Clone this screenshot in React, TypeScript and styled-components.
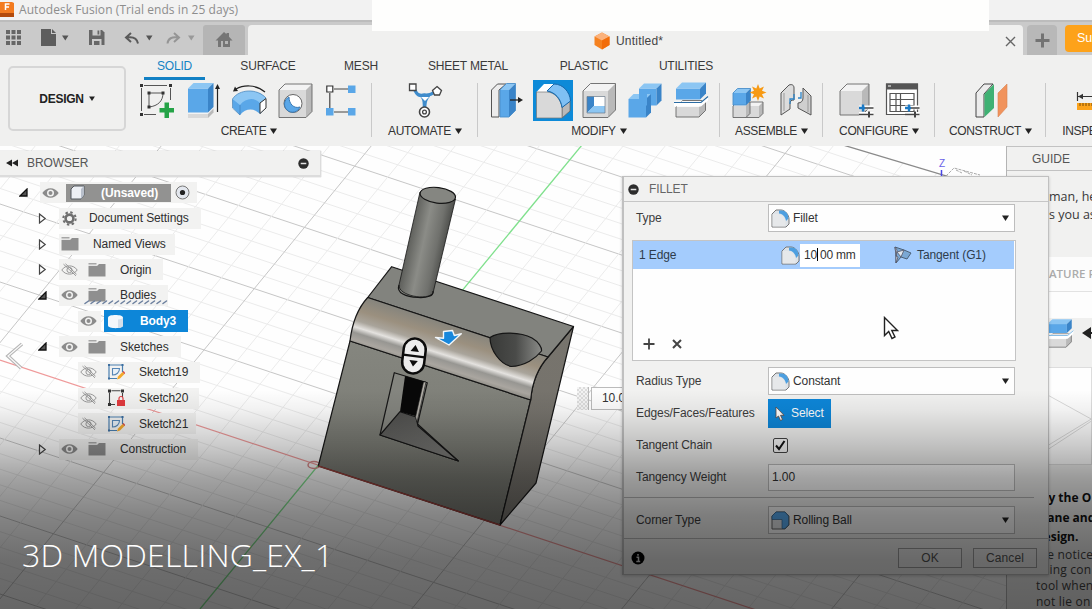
import React from "react";
import styled, { createGlobalStyle, css } from "styled-components";

const Global = createGlobalStyle`
  body { margin: 0; overflow: hidden; background: #fefefe; }
  * { box-sizing: border-box; }
`;

const Window = styled.div`
  position: relative;
  display: flex;
  flex-direction: column;
  width: 1092px;
  height: 609px;
  overflow: hidden;
  font-family: "Liberation Sans", Arial, sans-serif;
  font-size: 12px;
  letter-spacing: -0.1px;
  color: #333;
  white-space: nowrap;
`;

/* ---------- title and document tabs ---------- */

const TitleBar = styled.header`
  display: flex;
  align-items: center;
  height: 20px;
  flex: none;
  gap: 4px;
  background: #f2f2f2;
  color: #8d8d8d;
  font-family: "Open Sans", "Noto Sans", sans-serif;
  font-size: 12px;
  letter-spacing: 0.07px;
  svg { flex: none; }
`;

const TitleText = styled.span`
  margin-top: -2px;
`;

const BlankPatch = styled.div`
  position: absolute;
  left: 372px;
  top: 0;
  width: 617px;
  height: 31px;
  background: #fefefd;
`;

const TabStrip = styled.div`
  display: flex;
  align-items: flex-end;
  height: 35px;
  flex: none;
  background: #cacaca;
  border-top: 2px solid #bcbcbc;
  > * { flex: none; }
`;

const QuickBar = styled.div`
  width: 203px;
  height: 33px;
  display: flex;
  align-items: center;
`;

const HomeTab = styled.div`
  width: 42px;
  height: 30px;
  background: #b5b5b5;
  border-radius: 3px 3px 0 0;
  display: grid;
  place-items: center;
`;

const DocumentTab = styled.div`
  margin-left: 3px;
  width: 775px;
  height: 30px;
  padding: 2px 7px 0 346px;
  background: #f0f0ef;
  border-radius: 4px 4px 0 0;
  display: flex;
  align-items: center;
  color: #444;
  svg { flex: none; }
`;

const DocumentName = styled.span`
  flex: 1;
  margin-left: 6px;
  letter-spacing: 0.2px;
`;

const NewTab = styled.div`
  margin-left: 4px;
  width: 30px;
  height: 30px;
  background: #b8b8b8;
  border-radius: 4px 4px 0 0;
  display: grid;
  place-items: center;
`;

const Subscribe = styled.div`
  margin: 0 -60px 3px 8px;
  width: 80px;
  height: 27px;
  padding-left: 12px;
  line-height: 27px;
  border-radius: 4px;
  background: #fda21a;
  color: #fff;
  font-size: 12.5px;
`;

/* ---------- ribbon ---------- */

const Ribbon = styled.nav`
  display: flex;
  height: 91px;
  flex: none;
  background: #f0f0ef;
`;

const WorkspaceButton = styled.div`
  flex: none;
  margin: 11px 0 0 8px;
  width: 118px;
  height: 65px;
  border: 2px solid #d6d6d6;
  border-radius: 5px;
  display: flex;
  align-items: center;
  justify-content: center;
  gap: 5px;
  font-weight: bold;
  color: #222;
  letter-spacing: -0.25px;
`;

const RibbonBody = styled.div`
  display: flex;
  flex-direction: column;
  flex: none;
  width: 966px;
`;

const RibbonTabs = styled.div`
  display: flex;
  height: 25px;
`;

const RibbonTab = styled.div<{ $w: number; $ml?: number; $active?: boolean }>`
  width: ${(p) => p.$w}px;
  margin-left: ${(p) => p.$ml ?? 0}px;
  text-align: center;
  line-height: 23px;
  letter-spacing: -0.2px;
  height: 25px;
  color: ${(p) => (p.$active ? "#1584c4" : "#3a3a3a")};
  border-bottom: 3px solid ${(p) => (p.$active ? "#1180c4" : "transparent")};
`;

const Groups = styled.div`
  display: flex;
`;

const Group = styled.section<{ $w: number }>`
  position: relative;
  width: ${(p) => p.$w}px;
  flex: none;
  display: flex;
  flex-direction: column;
  align-items: center;
  height: 60px;
  &::after {
    content: "";
    position: absolute;
    right: 0;
    top: 3px;
    height: 54px;
    width: 1px;
    background: #c9c9c9;
  }
`;

const Tools = styled.div<{ $gap?: number }>`
  display: flex;
  gap: ${(p) => p.$gap ?? 6}px;
  height: 41px;
`;

const Tool = styled.div<{ $active?: boolean }>`
  width: 40px;
  height: 41px;
  ${(p) => p.$active && css`background: #0d8ad8;`}
`;

const GroupLabel = styled.div`
  display: flex;
  align-items: center;
  gap: 4px;
  margin-top: 3px;
  line-height: 14px;
  letter-spacing: -0.35px;
  color: #333;
`;

/* ---------- work area ---------- */

const WorkArea = styled.main`
  position: relative;
  display: flex;
  flex: 1;
  min-height: 0;
`;

const Viewport = styled.div`
  position: relative;
  width: 1006px;
  overflow: hidden;
  background: #fefefe;
  > svg { display: block; }
`;

const BrowserPanel = styled.aside`
  position: absolute;
  left: 0;
  top: 5px;
  width: 321px;
`;

const BrowserHead = styled.div`
  display: flex;
  align-items: center;
  height: 26px;
  padding: 0 11px 0 6px;
  margin-bottom: 3px;
  background: #f1f1f0;
  border: 1px solid #dcdcdc;
  border-width: 0 1px 2px 0;
  box-shadow: 0 0 1px #aaa;
  color: #555;
  span { flex: 1; margin-left: 9px; letter-spacing: -0.1px; }
`;

const TreeRow = styled.div<{ $indent: number }>`
  display: flex;
  align-items: center;
  height: 25.67px;
  padding-left: ${(p) => p.$indent}px;
  color: #2f2f2f;
`;

const Twisty = styled.div`
  width: 21px;
  display: flex;
`;

const RowBody = styled.div<{ $w: number }>`
  width: ${(p) => p.$w}px;
  height: 21px;
  display: flex;
  align-items: center;
  padding-left: 2px;
  background: #f2f2f1;
  svg { flex: none; }
`;

const RowLabel = styled.span<{ $ml: number }>`
  margin-left: ${(p) => p.$ml}px;
`;

const SlotIcon = styled.span<{ $ml: number }>`
  margin-left: ${(p) => p.$ml}px;
  display: flex;
`;

const RootChip = styled.div`
  margin: 0 4px 0 7px;
  width: 105px;
  height: 18px;
  background: #929291;
  color: #fff;
  font-weight: bold;
  display: flex;
  align-items: center;
  padding-left: 4px;
  gap: 15px;
`;

const BodyChip = styled.div`
  margin-left: 4px;
  width: 84px;
  height: 22px;
  flex: none;
  background: #0d86d8;
  color: #fff;
  font-weight: bold;
  display: flex;
  align-items: center;
  padding-left: 3px;
  gap: 16px;
`;

const HatchMark = styled.svg`
  position: absolute;
  left: 84px;
  top: 148px;
`;

const FloatingValue = styled.div`
  position: absolute;
  left: 577px;
  top: 241px;
  width: 60px;
  height: 23px;
  display: flex;
  gap: 2px;
`;

const Grip = styled.div`
  width: 12px;
  border-right: 1px solid #bbb;
  background: repeating-conic-gradient(#dcdcdc 0 25%, #f4f4f4 0 50%) 0 0 / 4px 4px;
`;

const FloatingField = styled.div`
  flex: 1;
  border: 1px solid #bbb;
  background: #fdfdfd;
  padding-left: 10px;
  line-height: 21px;
`;

/* ---------- guide ---------- */

const Guide = styled.aside`
  width: 86px;
  overflow: hidden;
  display: flex;
  flex-direction: column;
  background: #f1f1f0;
  border-left: 1px solid #b4b4b4;
  font-family: "Open Sans", "Noto Sans", sans-serif;
  letter-spacing: 0;
`;

const GuideHead = styled.div`
  height: 25px;
  flex: none;
  border: 1px solid #c2c2c2;
  border-width: 1px 0;
  line-height: 24px;
  padding-left: 25px;
  color: #555;
  font-family: "Liberation Sans", Arial, sans-serif;
`;

const GuideIntro = styled.div`
  height: 86px;
  flex: none;
  padding: 17px 0 0 42px;
  font-size: 12.5px;
  line-height: 18px;
  color: #383838;
`;

const GuideHeading = styled.div`
  height: 35px;
  flex: none;
  margin-left: 16px;
  padding-left: 26px;
  line-height: 34px;
  background: #fcfcfc;
  border-bottom: 1px solid #e2e2e2;
  font-size: 11.5px;
  font-weight: 600;
  color: #ababab;
`;

const GuideStep = styled.div`
  height: 75px;
  flex: none;
  margin-left: 16px;
  padding: 26px 0 0 22px;
  display: flex;
  gap: 7px;
  align-items: flex-start;
  background: linear-gradient(#fdfdfd 26px, #f0f0ef 26px);
  svg { flex: none; }
`;

const GuideFigure = styled.div`
  height: 98px;
  flex: none;
  margin-left: 16px;
  background: #fefefe;
  border: 1px solid #ddd;
`;

const GuideCopy = styled.div`
  padding: 23px 0 0 29px;
`;

const GuideStrong = styled.div`
  font-weight: 700;
  font-size: 12px;
  line-height: 19.5px;
  color: #111;
`;

const GuideLine = styled.div`
  font-size: 12px;
  line-height: 15.8px;
  letter-spacing: 0.2px;
  color: #444;
`;

/* ---------- fillet dialog ---------- */

const Dialog = styled.section`
  position: absolute;
  left: 622px;
  top: 30px;
  width: 427px;
  height: 399px;
  background: #f1f1f0;
  border: 1px solid #c0c0c0;
  border-left-width: 2px;
  box-shadow: 0 1px 3px rgba(0, 0, 0, 0.2);
`;

const DialogHead = styled.div`
  height: 25px;
  border-bottom: 1px solid #c6c6c6;
  display: flex;
  align-items: center;
  gap: 10px;
  padding-left: 4px;
  color: #666;
`;

const Field = styled.div<{ $h?: number }>`
  height: ${(p) => p.$h ?? 32}px;
  display: flex;
  align-items: center;
  padding-left: 12px;
`;

const FieldLabel = styled.label`
  width: 132px;
  color: #3c3c3c;
`;

const Combo = styled.div`
  width: 247px;
  height: 28px;
  background: #fefefe;
  border: 1px solid #bdbdbd;
  display: flex;
  align-items: center;
  padding: 0 5px 0 2px;
  span { flex: 1; margin-left: 3px; }
`;

const Entry = styled(Combo)`
  height: 27px;
  span { margin-left: 1px; }
`;

const EdgeList = styled.div`
  margin: 6px 0 4px 8px;
  width: 384px;
  height: 121px;
  background: #fefefe;
  border: 1px solid #c4c4c4;
  display: flex;
  flex-direction: column;
  justify-content: space-between;
`;

const EdgeRow = styled.div`
  height: 28px;
  margin-right: 1px;
  background: #a4ccfd;
  display: flex;
  align-items: center;
  padding-left: 6px;
  color: #2e3c4c;
`;

const EdgeCount = styled.span`
  width: 142px;
`;

const EdgeValue = styled.div`
  width: 60px;
  height: 23px;
  margin: 0 34px 0 0;
  background: #fff;
  line-height: 23px;
  padding-left: 4px;
  color: #333;
  letter-spacing: -0.2px;
`;

const Caret = styled.i`
  display: inline-block;
  width: 1px;
  height: 13px;
  background: #000;
  vertical-align: -2px;
  margin: 0 2px 0 0;
`;

const ListActions = styled.div`
  display: flex;
  gap: 16px;
  padding: 0 0 10px 10px;
`;

const SelectButton = styled.div`
  width: 63px;
  height: 29px;
  background: #0d86d8;
  color: #fff;
  display: flex;
  align-items: center;
  padding-left: 7px;
  gap: 6px;
`;

const Check = styled.div`
  margin-left: 5px;
  width: 15px;
  height: 15px;
  border: 1.5px solid #444;
  border-radius: 2px;
  background: #f6f6f6;
  display: flex;
`;

const CornerSection = styled.div`
  margin: 4px 14px 0 0;
  padding-top: 6px;
  border-top: 1px solid #b5b5b5;
`;

const DialogFoot = styled.footer`
  margin-top: 2px;
  border-top: 1px solid #b8b8b8;
  height: 38px;
  display: flex;
  align-items: center;
  padding: 0 11px 0 7px;
  gap: 11px;
`;

const Spacer = styled.span`
  flex: 1;
`;

const PushButton = styled.div`
  width: 64px;
  height: 20px;
  border: 1px solid #a2a2a2;
  background: #f3f3f3;
  text-align: center;
  line-height: 18px;
  letter-spacing: 0.1px;
  color: #555;
`;

const Pointer = styled.svg`
  position: absolute;
  left: 883px;
  top: 170px;
`;

/* ---------- caption ---------- */

const Shade = styled.div`
  position: absolute;
  inset: 390px 0 0 0;
  background: linear-gradient(
    rgba(0, 0, 0, 0) 0,
    rgba(0, 0, 0, 0.05) 20px,
    rgba(0, 0, 0, 0.2) 55px,
    rgba(0, 0, 0, 0.36) 88px,
    rgba(0, 0, 0, 0.48) 125px,
    rgba(0, 0, 0, 0.57) 170px,
    rgba(0, 0, 0, 0.6) 219px
  );
  display: flex;
  align-items: flex-end;
  padding: 0 0 31px 22px;
`;

const Caption = styled.h1`
  margin: 0;
  font-family: "Open Sans", "Noto Sans", sans-serif;
  font-weight: 300;
  font-size: 32px;
  line-height: 46px;
  letter-spacing: 0.2px;
  color: #fff;
`;

/* ---------- small glyphs ---------- */

const Down = ({ c = "#222", s = 7 }: { c?: string; s?: number }) => (
  <svg width={s} height={s - 1} viewBox="0 0 7 6"><path d="M0 .5h7L3.5 6z" fill={c} /></svg>
);

const Minus = () => (
  <svg width="11" height="11" viewBox="0 0 11 11">
    <circle cx="5.5" cy="5.5" r="5.2" fill="#2c2c2c" /><path d="M2.7 5.5h5.6" stroke="#e4e4e4" strokeWidth="1.5" />
  </svg>
);

const Eye = ({ off }: { off?: boolean }) => (
  <svg width="17" height="14" viewBox="0 0 17 14">
    {off ? (
      <g fill="none" stroke="#979797" strokeWidth="1">
        <path d="M.8 7C4.5 1.500 12.500 1.500 16.200 7C12.500 12.500 4.500 12.500.8 7z" /><circle cx="8.500" cy="7" r="2.600" /><path d="M2.500 1.200l12.500 11.600M4.500.8l11 10.400" />
      </g>
    ) : (
      <>
        <path d="M.3 7C4.300.6 12.700.6 16.700 7C12.700 13.400 4.300 13.400.3 7z" fill="#8b8b8b" />
        <circle cx="8.500" cy="7" r="3.500" fill="#f2f2f1" /><circle cx="8.500" cy="7" r="2" fill="#8b8b8b" />
      </>
    )}
  </svg>
);

const Folder = () => (
  <svg width="18" height="14" viewBox="0 0 18 14">
    <path d="M.5 3h8.500L11 1h6.500v12.500H.5z" fill="#8f8f8f" /><path d="M.5 .8h8" stroke="#999" strokeWidth="1.300" /><path d="M.5 2.500h8.500" stroke="#dcdcdc" strokeWidth=".7" />
  </svg>
);

const Gear = () => (
  <svg width="15" height="15" viewBox="0 0 15 15">
    <circle cx="7.500" cy="7.500" r="3.900" fill="none" stroke="#6f6f6f" strokeWidth="2.600" />
    <circle cx="7.500" cy="7.500" r="6.200" fill="none" stroke="#6f6f6f" strokeWidth="2" strokeDasharray="2.400 2.470" />
  </svg>
);

const Open = () => (
  <svg width="10" height="9" viewBox="0 0 10 9"><path d="M8 1v7H1z" fill="#555" stroke="#111" strokeWidth="1.300" /></svg>
);

const Closed = () => (
  <svg width="9" height="11" viewBox="0 0 9 11"><path d="M1.500 1L7.200 5.500L1.500 10z" fill="#fff" stroke="#444" strokeWidth="1.200" /></svg>
);

const SketchGlyph = ({ locked }: { locked?: boolean }) => (
  <svg width="18" height="18" viewBox="0 0 18 18" fill="none">
    {locked ? (
      <>
        <path d="M2.500 3.500v11M4.500 1.800h9M15.500 4v4M4 15.500h4" stroke="#444" strokeWidth="1.100" />
        <path d="M1 .5h3v3H1zM14 .5h3v3h-3zM1 14h3v3H1z" fill="#333" />
        <path d="M10 11h8v6h-8z" fill="#e03a3e" /><path d="M12 11V9.500a2 2 0 014 0V11" stroke="#e03a3e" strokeWidth="1.200" />
      </>
    ) : (
      <>
        <path d="M2 2h13.500v7M2 2v13.500h8" stroke="#4a7fb0" strokeWidth="1.200" />
        <path d="M5.500 5.500h7c0 4-3 6.500-7 6.500z" stroke="#5686b5" strokeWidth="1.100" fill="#e9f1f8" />
        <path d="M1 1h2v2H1zM14.500 1h2v2h-2zM1 14.500h2v2H1z" fill="#3d6e9f" />
        <path d="M10 16.500l1-3L15.500 9l2 2L13 15.500z" fill="#f2a92c" /><path d="M15.500 9l1-1 2 2-1 1z" fill="#d8423a" />
      </>
    )}
  </svg>
);

const FilletGlyph = () => (
  <svg width="19" height="19" viewBox="0 0 19 19">
    <path d="M1 5L5 1h5c4 0 8 5 8 9v5l-3 3H1z" fill="#dde2e7" stroke="#777" strokeWidth="1" />
    <path d="M8 1.500h3c4 0 6.500 4 6.500 8L15 12C14.500 8 12 5 8 4.500z" fill="#4d9fe0" />
    <path d="M1.500 5h5C11 5 14.500 9 14.500 13v4.500h-13z" fill="#e6e8ea" />
  </svg>
);

/* ---------- ribbon drawings ---------- */

const BL = "#5aa7e8", BT = "#8cc6f3", BS = "#3a84c8", GF = "#d9d9d9", GT = "#f3f3f3", GS = "#b9b9b9", LN = "#666";

const Art = ({ children }: { children: React.ReactNode }) => (
  <svg width="40" height="40" viewBox="0 0 40 40" fill="none">{children}</svg>
);

interface BlockProps { x: number; y: number; w: number; h: number; d: number; blue?: boolean; line?: boolean }
const Block = ({ x, y, w, h, d, blue, line = true }: BlockProps) => (
  <g>
    <path d={`M${x} ${y}h${w}v${h}h${-w}z`} fill={blue ? BL : GF} />
    <path d={`M${x} ${y}l${d} ${-d}h${w}l${-d} ${d}z`} fill={blue ? BT : GT} />
    <path d={`M${x + w} ${y}l${d} ${-d}v${h}l${-d} ${d}z`} fill={blue ? BS : GS} />
    {line && <path d={`M${x} ${y}l${d} ${-d}h${w}v${h}l${-d} ${d}h${-w}z`} fill="none" stroke={blue ? "#4a8fca" : LN} strokeWidth=".9" />}
  </g>
);

const Sketch = () => (
  <Art>
    <path d="M7 5.500h23M4.500 8v23M33.500 8v12M7 34.500h12" stroke="#555" />
    <path d="M3 4h3v3H3zM32 4h3v3h-3zM3 33h3v3H3z" fill="#333" />
    <path d="M12 13h14c0 8-5 13-14 14z" stroke="#555" /><path d="M10.500 11.500h3v3h-3zM24.500 11.500h3v3h-3zM10.500 25.500h3v3h-3z" fill="#333" />
    <path d="M27.500 22.500h4.500v5.500h5v4.500h-5v5.500h-4.500v-5.500h-5V28h5z" fill="#25a347" />
  </Art>
);
const Extrude = () => (
  <Art>
    <Block x={5} y={34} w={20} h={4} d={5.5} line={false} /><Block x={5} y={8.500} w={20} h={24} d={5.5} blue line={false} />
    <path d="M34.500 32V7" stroke="#222" strokeWidth="1.200" /><path d="M32 9l2.500-5L37 9z" fill="#222" />
  </Art>
);
const Revolve = () => (
  <Art>
    <path d="M7 9C14 5 27 4 36 12" stroke="#222" strokeWidth="1.200" /><path d="M4 11.500l2-5 3 4.500z" fill="#222" />
    <path d="M3.500 20C10 10 28 8 37 18v10l-6 6c-6-6-14-6-20 1l-7-7z" fill={BL} />
    <path d="M3.500 19C10 9 28 8 37 18l-6 5c-6-6-14-5-20 2z" fill={BT} />
    <path d="M31 23l6-4.500V28l-6 5.500z" fill="#fff" stroke="#333" /><path d="M3.500 19v9l7.500 7V25M3.500 19C10 9 28 8 37 18" stroke="#3f80b8" strokeWidth=".7" />
  </Art>
);
const Hole = () => (
  <Art>
    <Block x={4} y={10} w={27} h={27.500} d={6} /><circle cx="18" cy="23.500" r="9" fill="#fff" stroke="#666" />
    <path d="M14 17a8 8 0 1011 10c-6 2-11-3-11-10z" fill={BL} stroke="#3a7ab5" />
  </Art>
);
const Pattern = () => (
  <Art>
    <path d="M13 9h14M8.800 13v15M13 32h14" stroke="#444" strokeWidth="1.200" />
    <path d="M5.800 6h6v6h-6z" fill="#fff" stroke="#333" strokeWidth="1.200" />
    <path d="M27 5.500h7.500V13H27zM5 28h7.500v7.500H5zM27 28h7.500v7.500H27z" fill={BL} />
  </Art>
);
const Automate = () => (
  <Art>
    <path d="M9 8c3 8 6 8 10.500 7C24 16 27 14 31 11M16 15c5 5 3 9 3.500 14M24 15c-5 5-4 9-4.500 14" stroke="#3f8ccc" strokeWidth="3.400" />
    <path d="M16 17l4 4 4-4z" fill="#fff" />
    <path d="M4.500 4h6.500v6.500H4.500z" fill="#fff" stroke="#444" strokeWidth="1.300" />
    <path d="M32 6.500l4.500 4-2 4.500h-5l-2-4.500z" fill="#fff" stroke="#444" strokeWidth="1.300" />
    <circle cx="19.500" cy="32" r="5" fill="#fff" stroke="#444" strokeWidth="1.600" /><circle cx="19.500" cy="32" r="1.900" stroke="#444" strokeWidth="1.300" />
  </Art>
);
const PressPull = () => (
  <Art>
    <path d="M4.500 10l6-6H19L12 10v27H4.500z" fill="#ececec" stroke="#555" />
    <Block x={13} y={10} w={9} h={27} d={6.500} blue />
    <path d="M23 20h10" stroke="#222" strokeWidth="1.300" /><path d="M31 17l5 3-5 3z" fill="#222" />
  </Art>
);
const Fillet = () => (
  <Art>
    <path d="M29 33V27l8-6v10l-8 7z" fill={GS} stroke="#666" strokeWidth=".8" />
    <path d="M3.500 12L11 4h10l-6 8z" fill="#fff" />
    <path d="M3.500 12H14c8 0 14 8 15 16v10H3.500z" fill={GF} stroke="#777" strokeWidth=".7" />
    <path d="M14 11l7-7c9 0 16 8 16.500 17L29 27.500C28 19 22 12 14 11z" fill="#7fc0f4" stroke="#1766a8" />
  </Art>
);
const Shell = () => (
  <Art>
    <Block x={4} y={11} w={25} h={26.500} d={7.500} />
    <path d="M8 16.500h18V33H8z" fill="#fff" /><path d="M8 16.500h7V26l-7 7z" fill={BS} /><path d="M8 33l7-7h11v7z" fill={BT} />
    <path d="M8 16.500h18V33H8z" stroke="#6a7a8a" strokeWidth=".7" />
  </Art>
);
const Combine = () => (
  <Art>
    <Block x={14} y={8.500} w={17.500} h={17} d={5} blue line={false} /><Block x={3.500} y={19} w={17.500} h={18.500} d={5} blue line={false} />
    <path d="M14 13.500h8v12h-8z" fill={BL} />
  </Art>
);
const Split = () => (
  <Art>
    <Block x={5} y={27} w={23} h={10} d={6.500} /><path d="M3 21.500h27l7-6v5l-7 6H3z" fill="#fff" />
    <Block x={5} y={8.500} w={24} h={11} d={6} blue line={false} /><path d="M3 22.500h27l7-6" stroke="#2b6ca3" strokeWidth="1.200" />
  </Art>
);
const Component = () => (
  <Art>
    <Block x={18} y={26} w={13} h={11.500} d={4} /><Block x={5} y={26} w={13} h={11.500} d={4} /><Block x={5} y={13} w={13} h={12} d={4.500} blue />
    <path d="M30 4l1.700 4.500 4.300-2-2 4.300L38.500 12.500 34 14.200l2 4.300-4.300-2L30 21l-1.700-4.500-4.300 2 2-4.300-4.500-1.700L26 10.800l-2-4.300 4.300 2z" fill="#f79a14" />
  </Art>
);
const Joint = () => (
  <Art>
    <path d="M5 13l8-8c3-1 5 0 5 3v12c-3 0-4 1-4 4v5L5 35z" fill="#dcdcdc" stroke="#555" />
    <path d="M35 16L27 8v10c0 3-2 5-5 5v5l13 7z" fill="#cfcfcf" stroke="#555" /><path d="M8 13v18M32 15v17" stroke="#999" />
    <path d="M14 24v-5h4v-5M22 18h3v-6" stroke="#2c84c8" strokeWidth="1.300" />
  </Art>
);
const Sliders = () => (
  <g>
    <path d="M23 27.500h14.500M23 34h14.500" stroke="#fff" strokeWidth="4" /><path d="M23 28h14.500M23 34.500h14.500" stroke="#444" strokeWidth="1.600" />
    <path d="M27 24.500v7M23 28h6" stroke="#1c79c4" strokeWidth="2.400" /><path d="M33 31.500v6" stroke="#444" strokeWidth="2" />
  </g>
);
const Configure = () => (
  <Art><Block x={4} y={11} w={22} h={24} d={7} /><Sliders /></Art>
);
const Table = () => (
  <Art>
    <path d="M4.500 4h31v30.500h-31z" fill="#fff" stroke="#555" strokeWidth="1.200" /><path d="M4 3.500h32v6H4z" fill="#555" /><path d="M6 6h3" stroke="#fff" />
    <path d="M8 13.500h24v18H8zM8 19.500h24M8 25.500h24M14 13.500v18M18.500 13.500v18" stroke="#555" strokeWidth="1.200" /><Sliders />
  </Art>
);
const Construct = () => (
  <Art>
    <path d="M5 13L13 4h9L13 14v23H5z" fill="#ececec" stroke="#444" /><path d="M13.500 14l9.500-10v24l-9.500 9z" fill="#3fb173" />
    <path d="M27 13l9-9v23l-9 10z" fill="#f1935c" stroke="#d98350" strokeWidth=".6" />
  </Art>
);
const Inspect = () => (
  <Art>
    <path d="M4.500 12v9M5 16.500h30" stroke="#333" strokeWidth="1.200" /><path d="M5 16.500l5-2.800v5.600z" fill="#333" />
    <path d="M4 23h32v7H4z" fill="#fba31c" /><path d="M7 23v3M10 23v3M13 23v3M16 23v3M19 23v3" stroke="#7a4a00" />
  </Art>
);

interface GroupSpec { name: string; w: number; gap?: number; tools: [React.FC, boolean?][] }
const GROUPS: GroupSpec[] = [
  { name: "CREATE", w: 246, tools: [[Sketch], [Extrude], [Revolve], [Hole], [Pattern]] },
  { name: "AUTOMATE", w: 106, tools: [[Automate]] },
  { name: "MODIFY", w: 242, tools: [[PressPull], [Fillet, true], [Shell], [Combine], [Split]] },
  { name: "ASSEMBLE", w: 103, gap: 8, tools: [[Component], [Joint]] },
  { name: "CONFIGURE", w: 112, tools: [[Configure], [Table]] },
  { name: "CONSTRUCT", w: 111, tools: [[Construct]] },
  { name: "INSPECT", w: 93, tools: [[Inspect]] },
];

/* ---------- canvas scene ---------- */

const SLOPE_A = 0.333;
const SLOPE_B = 1.22;

const Grid = () => {
  const a: React.ReactNode[] = [];
  for (let i = -31; i <= 26; i++) {
    const y = 360 + i * 15.6;
    const major = i % 5 === 0;
    if (i) a.push(<line key={i} x1={0} y1={y} x2={1092} y2={y + 1092 * SLOPE_A} stroke={major ? "#c6c6c6" : "#ebebeb"} />);
  }
  const b: React.ReactNode[] = [];
  for (let i = -14; i <= 25; i++) {
    const x = 582 + i * 42;
    const major = i % 5 === 0;
    if (i) b.push(<line key={i} x1={x} y1={145} x2={x - 464 / SLOPE_B} y2={609} stroke={major ? "#c6c6c6" : "#ebebeb"} />);
  }
  return <g>{a}{b}</g>;
};

const Scene = () => (
  <svg width="1092" height="463" viewBox="0 146 1092 463">
    <defs>
      <linearGradient id="front" x1="0" y1="0" x2="0" y2="1"><stop offset="0" stopColor="#85867f" /><stop offset="1" stopColor="#73746d" /></linearGradient>
      <linearGradient id="side" x1="0" y1="0" x2="0" y2="1"><stop offset="0" stopColor="#77746d" /><stop offset="1" stopColor="#74716b" /></linearGradient>
      <linearGradient id="round" gradientUnits="userSpaceOnUse" x1="452" y1="324" x2="437" y2="372">
        <stop offset="0" stopColor="#85847d" /><stop offset=".3" stopColor="#9b907f" /><stop offset=".5" stopColor="#a9a49b" />
        <stop offset=".63" stopColor="#e4e2df" /><stop offset=".74" stopColor="#979692" /><stop offset=".88" stopColor="#aaa6a0" /><stop offset="1" stopColor="#86857e" />
      </linearGradient>
      <linearGradient id="pin" gradientUnits="userSpaceOnUse" x1="408" y1="240" x2="446" y2="248">
        <stop offset="0" stopColor="#5c5d59" /><stop offset=".4" stopColor="#8b8c87" /><stop offset=".75" stopColor="#70716d" /><stop offset="1" stopColor="#4b4c49" />
      </linearGradient>
      <linearGradient id="bore"><stop offset="0" stopColor="#393a38" /><stop offset=".5" stopColor="#4a4b49" /><stop offset="1" stopColor="#8a8b88" /></linearGradient>
      <linearGradient id="slope" x1="0" y1="0" x2=".3" y2="1"><stop offset="0" stopColor="#4a4a48" /><stop offset="1" stopColor="#7b7b78" /></linearGradient>
      <clipPath id="floor"><path d="M0 145H843L1092 219V609H0z" /></clipPath>
    </defs>
    <g clipPath="url(#floor)">
      <Grid />
      <path d="M0 360L1092 721" stroke="#ef9a9a" strokeWidth="1.200" />
      <path d="M582 145L200 609" stroke="#7fe08c" strokeWidth="1.300" />
    </g>
    <path d="M843 145L1006 194" stroke="#8a8a8a" strokeWidth="1.300" />
    <ellipse cx="314" cy="465" rx="6" ry="3.500" fill="none" stroke="#d98a8a" strokeWidth="1.500" />
    <path d="M22 344L8 356L21 368" fill="none" stroke="#b5b5b5" strokeWidth="3.500" /><path d="M22 344L8 356L21 368" fill="none" stroke="#fafafa" strokeWidth="1.200" />
    <g stroke="#161616" strokeWidth="1.200" strokeLinejoin="round">
      <path d="M350 341L530.700 400L500 525L318.300 466z" fill="url(#front)" />
      <path d="M573.500 326.500L536 483L500 525L530.700 400C532 384 538 368 548 357z" fill="url(#side)" />
      <path d="M391.700 266.700L573.500 326.500L548 357L367.700 297.500z" fill="#82837e" />
      <path d="M367.700 297.500L548 357C538 368 532 384 530.700 400L350 341C352 324 358 308 367.700 297.500z" fill="url(#round)" />
      <path d="M490 337.500C499 331 521 332 532 338C539 342 542 348 541.500 351C536 358 525 366 511 366.500C500 364 490 350 490 337.500z" fill="url(#bore)" />
      <path d="M420 192L399 285C398 296 428 301 433 293L455.500 199z" fill="url(#pin)" strokeWidth=".8" />
      <path d="M399 285C396 293 406 297 418 297.500C427 298 434 296 433 291" fill="none" />
      <ellipse cx="437.800" cy="195.300" rx="17.800" ry="7.800" transform="rotate(7 437.800 195.300)" fill="#858681" />
      <path d="M394.300 372.700L427.300 382.700L417.500 424L458.300 461L380 435z" fill="#84857f" />
      <path d="M400 411.700L416 417L418 426L458.300 461L380 435z" fill="url(#slope)" />
      <path d="M405 376L426 382L417 416.500L400 411.700z" fill="#080808" stroke="none" />
      <path d="M426 382L423.500 382L415.500 417L417 422z" fill="#b2afa8" strokeWidth=".6" />
    </g>
    <path d="M318.300 466L500 525" stroke="#98403b" strokeWidth="1.400" />
    <g transform="rotate(7 414 355.500)">
      <rect x="403" y="338.500" width="22" height="35" rx="11" fill="#ececec" stroke="#0b0b0b" strokeWidth="2.500" />
      <path d="M403 356h22" stroke="#0b0b0b" strokeWidth="2.400" /><path d="M410 351.500h8.500l-4.200-6.500zM410 360.500h8.500l-4.200 6z" fill="#0b0b0b" />
    </g>
    <path d="M443.500 331.500l9-1 1.800 5 7-1.800-12.300 11.300-13.500-7.500 8 .8z" fill="#1787dc" stroke="#f2f7fb" strokeWidth="1.400" strokeLinejoin="round" />
    <text x="939" y="167" fill="#6a62e8" fontSize="10" fontFamily="Liberation Sans">Z</text>
    <path d="M941.500 170v8" stroke="#4b46e6" strokeWidth="1.500" />
    <path d="M946 176l8-8 26 7M956 170l6 3m2-2l8 4" stroke="#aaa" fill="none" strokeDasharray="3 1" />
  </svg>
);

const Twist = ({ open }: { open?: boolean }) => <Twisty>{open ? <Open /> : <Closed />}</Twisty>;

interface FolderRowProps { name: string; w: number; eye: "on" | "off"; open?: boolean }
const FolderRow = ({ name, w, eye, open }: FolderRowProps) => (
  <TreeRow $indent={38}>
    <Twist open={open} />
    <RowBody $w={w}><Eye off={eye === "off"} /><SlotIcon $ml={10}><Folder /></SlotIcon><RowLabel $ml={14}>{name}</RowLabel></RowBody>
  </TreeRow>
);

const SketchRow = ({ name, w, locked }: { name: string; w: number; locked?: boolean }) => (
  <TreeRow $indent={78}>
    <RowBody $w={w}><Eye off /><SlotIcon $ml={10}><SketchGlyph locked={locked} /></SlotIcon><RowLabel $ml={14}>{name}</RowLabel></RowBody>
  </TreeRow>
);

const Browser = () => (
  <BrowserPanel>
    <BrowserHead>
      <svg width="12" height="8" viewBox="0 0 12 8"><path d="M6 .5v7L0 4zM12 .5v7L6 4z" fill="#222" /></svg>
      <span>BROWSER</span><Minus />
    </BrowserHead>
    <TreeRow $indent={19}>
      <Twist open />
      <RowBody $w={157}>
        <Eye />
        <RootChip>
          <svg width="16" height="15" viewBox="0 0 16 15"><path d="M1 4l3-3h10v9l-3 4H1z" fill="#eceff4" stroke="#53585f" /><path d="M11 4l3-3v9l-3 4z" fill="#b8bfcb" /></svg>
          (Unsaved)
        </RootChip>
        <svg width="15" height="15" viewBox="0 0 15 15"><circle cx="7.500" cy="7.500" r="6.500" fill="#e3e7ee" stroke="#777" /><circle cx="7.500" cy="7.500" r="2.600" fill="#222" /></svg>
      </RowBody>
    </TreeRow>
    <TreeRow $indent={38}><Twist /><RowBody $w={142}><SlotIcon $ml={1}><Gear /></SlotIcon><RowLabel $ml={12}>Document Settings</RowLabel></RowBody></TreeRow>
    <TreeRow $indent={38}><Twist /><RowBody $w={116}><Folder /><RowLabel $ml={14}>Named Views</RowLabel></RowBody></TreeRow>
    <FolderRow name="Origin" w={104} eye="off" />
    <FolderRow name="Bodies" w={109} eye="on" open />
    <TreeRow $indent={78}>
      <RowBody $w={23}>
        <Eye />
        <SlotIcon $ml={3}>
          <BodyChip>
            <svg width="17" height="15" viewBox="0 0 17 15"><path d="M1 3.500C1 .2 16 .2 16 3.500v8C16 15 1 15 1 11.500z" fill="#f4f7fb" /><path d="M11 5.500c3-.3 5-1 5-2v8c0 1.500-2 2.300-5 2.500z" fill="#d5dfea" /></svg>
            Body3
          </BodyChip>
        </SlotIcon>
      </RowBody>
    </TreeRow>
    <FolderRow name="Sketches" w={122} eye="on" open />
    <SketchRow name="Sketch19" w={122} />
    <SketchRow name="Sketch20" w={121} locked />
    <SketchRow name="Sketch21" w={118} />
    <FolderRow name="Construction" w={139} eye="on" />
    <HatchMark width="84" height="6" viewBox="0 0 84 6">
      {Array.from({ length: 14 }, (_, i) => <path key={i} d={`M${1 + i * 6} 4.500l3.500-2.500`} stroke="#6b7f9e" strokeWidth="1.500" strokeLinecap="round" />)}
    </HatchMark>
  </BrowserPanel>
);

const FilletDialog = () => (
  <Dialog>
    <DialogHead><Minus />FILLET</DialogHead>
    <Field $h={32}><FieldLabel>Type</FieldLabel><Combo><FilletGlyph /><span>Fillet</span><Down /></Combo></Field>
    <EdgeList>
      <EdgeRow>
        <EdgeCount>1 Edge</EdgeCount>
        <FilletGlyph />
        <EdgeValue>10<Caret />00 mm</EdgeValue>
        <svg width="18" height="18" viewBox="0 0 18 18"><path d="M1 1l9 3 7 3-4 6-6-2-5 6V9z" fill="#7ba8d4" stroke="#4c6178" /><path d="M1 1l2 3-1 6 2 1-2 6V9zM3 6l7-2-3 7z" fill="#dfe7ef" stroke="#556" strokeWidth=".8" /></svg>
        <RowLabel $ml={5}>Tangent (G1)</RowLabel>
      </EdgeRow>
      <ListActions>
        <svg width="12" height="12" viewBox="0 0 12 12"><path d="M6 .5v11M.5 6h11" stroke="#444" strokeWidth="1.800" /></svg>
        <svg width="12" height="12" viewBox="0 0 12 12"><path d="M2 2l8 8M10 2l-8 8" stroke="#444" strokeWidth="2" /></svg>
      </ListActions>
    </EdgeList>
    <Field><FieldLabel>Radius Type</FieldLabel><Combo><FilletGlyph /><span>Constant</span><Down /></Combo></Field>
    <Field>
      <FieldLabel>Edges/Faces/Features</FieldLabel>
      <SelectButton><svg width="10" height="15" viewBox="0 0 10 15"><path d="M1 1v11l2.500-2 2 4.500 2-1-2-4.200H9z" fill="#fff" stroke="#5c4a44" strokeWidth=".8" /></svg>Select</SelectButton>
    </Field>
    <Field><FieldLabel>Tangent Chain</FieldLabel><Check><svg width="12" height="12" viewBox="0 0 12 12"><path d="M2 6.500l3 3.500L10.500 2" fill="none" stroke="#111" strokeWidth="2" /></svg></Check></Field>
    <Field><FieldLabel>Tangency Weight</FieldLabel><Entry><span>1.00</span></Entry></Field>
    <CornerSection>
      <Field>
        <FieldLabel>Corner Type</FieldLabel>
        <Combo>
          <svg width="19" height="19" viewBox="0 0 19 19"><path d="M1 5l4-4h9l4 4v9l-4 4H1z" fill="#e2e4e6" stroke="#666" /><path d="M1 5l4-4h9l3.500 4v9L14 17.500h-3V8.500H1z" fill="#58abf0" stroke="#33658f" strokeWidth=".7" /></svg>
          <span>Rolling Ball</span><Down />
        </Combo>
      </Field>
    </CornerSection>
    <DialogFoot>
      <svg width="14" height="14" viewBox="0 0 14 14"><circle cx="7" cy="7" r="6.500" fill="#000" /><path d="M5.500 6.200h2v4.300M5.300 10.500h3.900M7 3v1.700" fill="none" stroke="#ddd" strokeWidth="1.500" /></svg>
      <Spacer />
      <PushButton>OK</PushButton>
      <PushButton>Cancel</PushButton>
    </DialogFoot>
  </Dialog>
);

const GuidePanel = () => (
  <Guide>
    <GuideHead>GUIDE</GuideHead>
    <GuideIntro>man, here<br />s you as</GuideIntro>
    <GuideHeading>ATURE F</GuideHeading>
    <GuideStep>
      <svg width="30" height="30" viewBox="2 1 37 37"><Block x={5} y={27} w={23} h={10} d={6.500} /><path d="M3 21.500h27l7-6v5l-7 6H3z" fill="#fff" /><Block x={5} y={8.500} w={24} h={11} d={6} blue line={false} /><path d="M3 22.500h27l7-6" fill="none" stroke="#7ab6e2" strokeWidth="1.200" /></svg>
      <svg width="18" height="30" viewBox="0 0 18 30"><path d="M0 15l9-6v12zM8 14h10v2H8z" fill="#222" /></svg>
    </GuideStep>
    <GuideFigure><svg width="69" height="96" viewBox="0 0 69 96"><path d="M0 14l69 38L20 84M0 92l69-42" stroke="#d9d9d9" fill="none" /></svg></GuideFigure>
    <GuideCopy>
      <GuideStrong>Try the O</GuideStrong>
      <GuideStrong>plane and</GuideStrong>
      <GuideStrong>design.</GuideStrong>
      <GuideLine>We notice</GuideLine>
      <GuideLine>using con</GuideLine>
      <GuideLine>tool when</GuideLine>
      <GuideLine>not lie on</GuideLine>
    </GuideCopy>
  </Guide>
);

export default function App() {
  return (
    <Window>
      <Global />
      <TitleBar>
        <svg width="15" height="18" viewBox="0 0 15 18"><path d="M0 1h12l2 1v14H0z" fill="#f37b20" /><path d="M0 12h14v4H0z" fill="#b34a0c" /><path d="M5.500 9V3h4M5.500 6h3.500" stroke="#fff" strokeWidth="1.500" fill="none" /></svg>
        <TitleText>Autodesk Fusion (Trial ends in 25 days)</TitleText>
      </TitleBar>
      <TabStrip>
        <QuickBar>
          <svg width="203" height="33" viewBox="0 22 203 33" fill="none">
            <path d="M6 30h4v4H6zM11.500 30h4v4h-4zM17 30h4v4h-4zM6 35.500h4v4H6zM11.500 35.500h4v4h-4zM17 35.500h4v4h-4zM6 41h4v4H6zM11.500 41h4v4h-4zM17 41h4v4h-4z" fill="#666" />
            <path d="M41 29h10v5h5v12H41zM52 29l4 4h-4z" fill="#5d5d5d" /><path d="M62 35.500h6.500l-3.200 5zM146 35.500h6.500l-3.200 5z" fill="#555" />
            <path d="M89 30h13l2.500 2.500V45H89z" fill="#666" /><path d="M92.500 30h8v5.500h-8zM92 39h9.500v6H92z" fill="#cacaca" /><path d="M97.500 30.500h1.800v4h-1.800zM94 41h5.500v4H94z" fill="#666" />
            <path d="M131 33l-5 4.500 5 4.500M127 37.500c6-1 10 1 11 6" stroke="#5a5a5a" strokeWidth="2" />
            <path d="M174 33l5 4.500-5 4.500M178 37.500c-6-1-10 1-10.500 6" stroke="#959595" strokeWidth="2" /><path d="M188 35.500h6.500l-3.200 5z" fill="#999" />
          </svg>
        </QuickBar>
        <HomeTab><svg width="18" height="16" viewBox="0 0 18 16"><path d="M9 0l2.500 2.300V1H14v3.800L17.500 8.500H15V15H3V8.500H.5z" fill="#757575" /><path d="M6 9h2v6H6zM10 9h3v3h-3z" fill="#b5b5b5" /></svg></HomeTab>
        <DocumentTab>
          <svg width="16" height="18" viewBox="0 0 16 18"><path d="M8 .5l7.500 4v8.500L8 17.500.5 13V4.500z" fill="#f58220" /><path d="M8 .5l7.500 4L8 8.500.5 4.500z" fill="#fbb27c" /><path d="M8 8.500l7.500-4v8.500L8 17.500z" fill="#f26d0a" /></svg>
          <DocumentName>Untitled*</DocumentName>
          <svg width="11" height="11" viewBox="0 0 11 11"><path d="M1 1l9 9M10 1l-9 9" stroke="#666" strokeWidth="1.400" /></svg>
        </DocumentTab>
        <NewTab><svg width="15" height="15" viewBox="0 0 15 15"><path d="M7.500 .5v14M.5 7.500h14" stroke="#737373" strokeWidth="3" /></svg></NewTab>
        <Subscribe>Subscribe</Subscribe>
      </TabStrip>
      <Ribbon>
        <WorkspaceButton>DESIGN <Down s={6} /></WorkspaceButton>
        <RibbonBody>
          <RibbonTabs>
            <RibbonTab $w={61} $ml={18} $active>SOLID</RibbonTab>
            <RibbonTab $w={80} $ml={23}>SURFACE</RibbonTab>
            <RibbonTab $w={60} $ml={23}>MESH</RibbonTab>
            <RibbonTab $w={100} $ml={27}>SHEET METAL</RibbonTab>
            <RibbonTab $w={70} $ml={31}>PLASTIC</RibbonTab>
            <RibbonTab $w={80} $ml={27}>UTILITIES</RibbonTab>
          </RibbonTabs>
          <Groups>
            {GROUPS.map((g) => (
              <Group key={g.name} $w={g.w}>
                <Tools $gap={g.gap}>{g.tools.map(([Icon, on], i) => <Tool key={i} $active={on}><Icon /></Tool>)}</Tools>
                <GroupLabel>{g.name}<Down /></GroupLabel>
              </Group>
            ))}
          </Groups>
        </RibbonBody>
      </Ribbon>
      <WorkArea>
        <Viewport>
          <Scene />
          <Browser />
          <FloatingValue><Grip /><FloatingField>10.00</FloatingField></FloatingValue>
        </Viewport>
        <GuidePanel />
        <FilletDialog />
        <Pointer width="16" height="24" viewBox="0 0 16 24"><path d="M1.500 1.500v18l4.200-4 3.300 7 3-1.500-3.200-6.500h5.700z" fill="#fff" stroke="#222" strokeWidth="1.400" /></Pointer>
      </WorkArea>
      <BlankPatch />
      <Shade><Caption>3D MODELLING_EX_1</Caption></Shade>
    </Window>
  );
}
